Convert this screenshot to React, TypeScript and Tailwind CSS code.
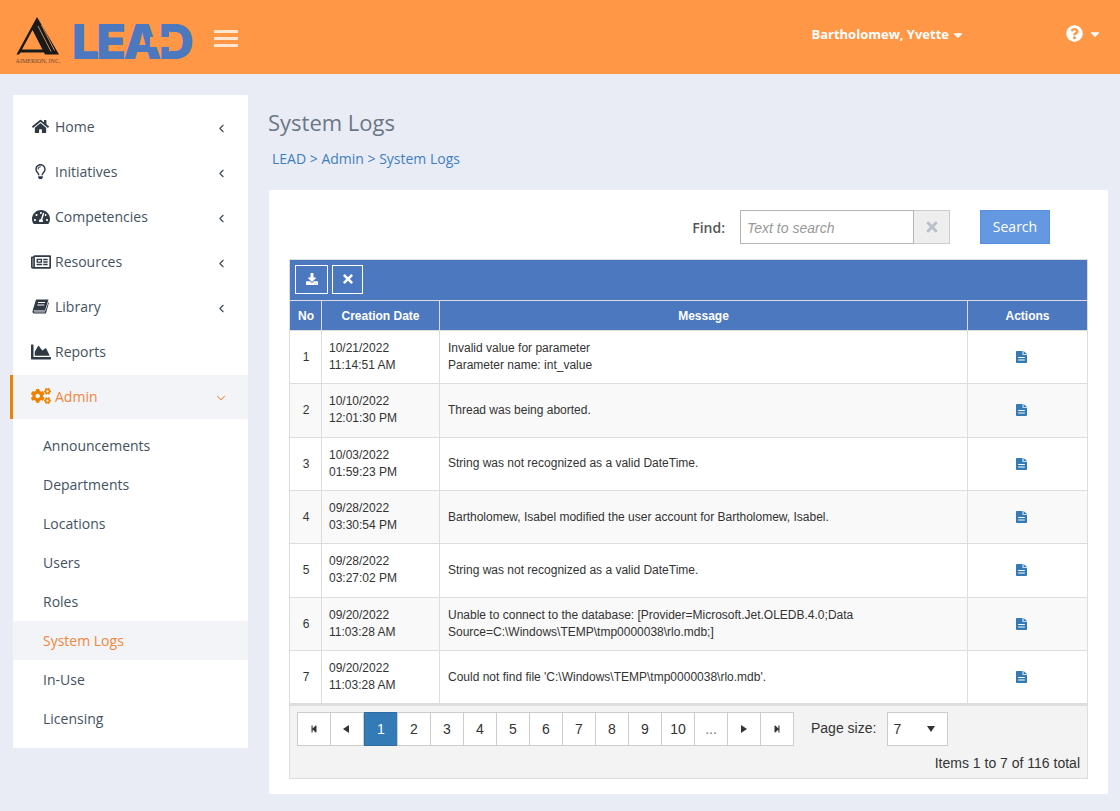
import { ChevronDown, ChevronLeft } from "lucide-react";
import {
  FaCaretDown,
  FaChartArea,
  FaCogs,
  FaDownload,
  FaHome,
  FaQuestionCircle,
  FaRegLightbulb,
  FaRegNewspaper,
  FaStepBackward,
  FaStepForward,
  FaTachometerAlt,
  FaTimes,
} from "react-icons/fa";

const OPEN_SANS = "font-['Open_Sans',sans-serif]";

function BookIcon() {
  return (
    <svg width="17" height="15" viewBox="0 0 17 15" fill="currentColor">
      <path d="M4 0.5H16.5L13.2 11H2.2L0.5 12Z" />
      <path d="M0.5 12.5C0.5 11.8 1.2 11.5 2 11.5H13.6L16.4 3.2L17 3.6L13.9 14.5H2C1 14.5 0.5 13.5 0.5 12.5Z" />
      <path d="M6 3.5H13M5.3 6H12.3" stroke="#fff" strokeWidth="1" />
      <path d="M2 12.9H13" stroke="#fff" strokeWidth="0.8" />
    </svg>
  );
}

function DocIcon() {
  return (
    <svg width="11" height="12" viewBox="0 0 11 12" fill="currentColor">
      <path
        fillRule="evenodd"
        d="M0 1C0 0.4 0.4 0 1 0H6.5V3.8H11V11C11 11.6 10.6 12 10 12H1C0.4 12 0 11.6 0 11ZM2.2 6V7H8.8V6ZM2.2 8.4V9.4H8.8V8.4Z"
      />
      <path d="M7.5 0L11 2.9H7.5Z" />
    </svg>
  );
}

const MENU = [
  { label: "Home", icon: <FaHome size={17} />, chevron: true },
  { label: "Initiatives", icon: <FaRegLightbulb size={15} />, chevron: true },
  { label: "Competencies", icon: <FaTachometerAlt size={18} />, chevron: true },
  { label: "Resources", icon: <FaRegNewspaper size={20} />, chevron: true },
  { label: "Library", icon: <BookIcon />, chevron: true },
  { label: "Reports", icon: <FaChartArea size={20} />, chevron: false },
];

const ADMIN_ITEMS = [
  "Announcements",
  "Departments",
  "Locations",
  "Users",
  "Roles",
  "System Logs",
  "In-Use",
  "Licensing",
];

const ROWS: { date: string; time: string; message: string[] }[] = [
  {
    date: "10/21/2022",
    time: "11:14:51 AM",
    message: ["Invalid value for parameter", "Parameter name: int_value"],
  },
  { date: "10/10/2022", time: "12:01:30 PM", message: ["Thread was being aborted."] },
  {
    date: "10/03/2022",
    time: "01:59:23 PM",
    message: ["String was not recognized as a valid DateTime."],
  },
  {
    date: "09/28/2022",
    time: "03:30:54 PM",
    message: ["Bartholomew, Isabel modified the user account for Bartholomew, Isabel."],
  },
  {
    date: "09/28/2022",
    time: "03:27:02 PM",
    message: ["String was not recognized as a valid DateTime."],
  },
  {
    date: "09/20/2022",
    time: "11:03:28 AM",
    message: [
      "Unable to connect to the database: [Provider=Microsoft.Jet.OLEDB.4.0;Data",
      "Source=C:\\Windows\\TEMP\\tmp0000038\\rlo.mdb;]",
    ],
  },
  {
    date: "09/20/2022",
    time: "11:03:28 AM",
    message: ["Could not find file 'C:\\Windows\\TEMP\\tmp0000038\\rlo.mdb'."],
  },
];

function Logo() {
  return (
    <div className="ml-[14px] flex items-start">
      <div className="flex w-[48px] flex-col items-center">
        <svg width="44" height="40" viewBox="0 0 44 40" className="mt-[16px]">
          <path d="M21 1L43 38.5H29L16.5 14L6 33.5H28.5L30 36.5H4.5L3 38.5H0.5Z" fill="#1a1a1a" />
          <path d="M22 10L35 35.5M25.5 9L38.5 34.5" stroke="#c98a55" strokeWidth="1" />
        </svg>
        <span className="mt-[2px] whitespace-nowrap font-['Liberation_Serif',serif] text-[6px] leading-[6px] text-[#6b4a30]">
          AIMERION, INC.
        </span>
      </div>
      <div className="relative ml-[10px] mt-[13px] h-[48px] w-[120px]">
        <span className="block font-['Inter',sans-serif] text-[48px] font-black leading-[57px] tracking-[-2.6px] text-[#4c78c0]">
          LEAD
        </span>
        <svg width="120" height="48" viewBox="0 0 120 48" className="absolute left-0 top-0">
          <path d="M78 24H97V18L111 29L97 39V34H78Z" fill="#ff9747" />
        </svg>
      </div>
      <div className="ml-[22px] mt-[30px] flex w-[24px] flex-col gap-[4px]">
        <span className="h-[3px] bg-[#ffe6d1]" />
        <span className="h-[3px] bg-[#ffe6d1]" />
        <span className="h-[3px] bg-[#ffe6d1]" />
      </div>
    </div>
  );
}

function Header() {
  return (
    <header className={`flex h-[74px] items-start bg-[#ff9747] ${OPEN_SANS}`}>
      <Logo />
      <div className="ml-auto mt-[26px] flex h-[17px] items-center text-[13px] font-bold text-white">
        <span>Bartholomew, Yvette</span>
        <FaCaretDown size={14} className="ml-[2px]" />
      </div>
      <div className="ml-[101px] mr-[18px] mt-[25px] flex items-center text-white">
        <FaQuestionCircle size={17} />
        <FaCaretDown size={14} className="ml-[5px]" />
      </div>
    </header>
  );
}

function Sidebar() {
  return (
    <aside className={`ml-[13px] mt-[21px] h-[653px] w-[235px] shrink-0 bg-white pt-[10px] text-[14px] ${OPEN_SANS}`}>
      {MENU.map((item) => (
        <div key={item.label} className="flex h-[45px] items-center pl-[13px] pr-[20px] text-[#44525f]">
          <span className="flex w-[29px] justify-center pb-[2px] text-[#2f3a45]">{item.icon}</span>
          <span className="pb-[2px]">{item.label}</span>
          {item.chevron && <ChevronLeft size={13} strokeWidth={2} className="ml-auto mt-[2px] text-[#3b4752]" />}
        </div>
      ))}
      <div className="-ml-[3px] flex h-[44px] items-center border-l-[3px] border-[#ee8200] bg-[#f2f4f8] pl-[13px] pr-[20px] text-[#f0873a]">
        <span className="flex w-[29px] justify-center pb-[2px] text-[#ee8200]">
          <FaCogs size={20} />
        </span>
        <span className="pb-[2px]">Admin</span>
        <ChevronDown size={14} strokeWidth={1.75} className="ml-auto mt-[2px]" />
      </div>
      <div className="pt-[7px]">
        {ADMIN_ITEMS.map((item) => (
          <div
            key={item}
            className={
              item === "System Logs"
                ? "flex h-[39px] items-center bg-[#f2f4f8] pl-[30px] text-[#f0873a]"
                : "flex h-[39px] items-center pl-[30px] text-[#44525f]"
            }
          >
            {item}
          </div>
        ))}
      </div>
    </aside>
  );
}

function SearchBar() {
  return (
    <div className={`flex h-[34px] items-center justify-end pr-[38px] ${OPEN_SANS}`}>
      <span className="mr-[15px] text-[14px] font-semibold text-[#555]">Find:</span>
      <div className="flex h-[34px] w-[174px] items-center border border-[#b5b5b5] bg-white pl-[6px] pt-[2px] font-['Liberation_Sans',sans-serif] text-[14px] italic text-[#999]">
        Text to search
      </div>
      <div className="flex h-[34px] w-[36px] items-center justify-center border border-l-0 border-[#ccc] bg-[#eee] text-[#b9c0c9]">
        <FaTimes size={16} />
      </div>
      <button
        type="button"
        className="ml-[30px] h-[34px] w-[70px] border border-[#5a90dd] bg-[#6499e2] pb-[2px] text-[14px] text-white"
      >
        Search
      </button>
    </div>
  );
}

function PagerButton({ children, active }: { children: React.ReactNode; active?: boolean }) {
  return (
    <div
      className={
        active
          ? "flex h-[34px] w-[34px] items-center justify-center border border-[#2e6da4] bg-[#337ab7] text-white"
          : "-ml-px flex h-[34px] w-[34px] items-center justify-center border border-[#ccc] bg-white text-[#333]"
      }
    >
      {children}
    </div>
  );
}

function Pager() {
  return (
    <div className="h-[75px] border border-t-[2px] border-[#ddd] bg-[#f3f3f3] px-[7px] pt-[6px] text-[14px] text-[#333]">
      <div className="flex items-center pl-px">
        <PagerButton>
          <FaStepBackward size={8} />
        </PagerButton>
        <PagerButton>
          <span className="mr-[2px] h-0 w-0 border-y-[4px] border-r-[6px] border-y-transparent border-r-[#333]" />
        </PagerButton>
        <PagerButton active>1</PagerButton>
        {["2", "3", "4", "5", "6", "7", "8", "9", "10"].map((page) => (
          <PagerButton key={page}>{page}</PagerButton>
        ))}
        <PagerButton>
          <span className="text-[#777]">...</span>
        </PagerButton>
        <PagerButton>
          <span className="h-0 w-0 border-y-[4px] border-l-[6px] border-y-transparent border-l-[#333]" />
        </PagerButton>
        <PagerButton>
          <FaStepForward size={8} />
        </PagerButton>
        <span className="ml-[17px] pb-[2px]">Page size:</span>
        <div className="ml-[11px] flex h-[34px] w-[61px] items-center justify-between border border-[#ccc] bg-white pl-[5px] pr-[12px]">
          <span>7</span>
          <span className="h-0 w-0 border-x-[4px] border-t-[6px] border-x-transparent border-t-[#333]" />
        </div>
      </div>
      <div className="mt-[9px] text-right leading-[16px]">Items 1 to 7 of 116 total</div>
    </div>
  );
}

function LogTable() {
  return (
    <div className="mt-[15px] font-['Liberation_Sans',sans-serif] text-[12px] text-[#333]">
      <div className="flex h-[41px] items-center gap-[4px] border-x border-t border-[#ddd] bg-[#4c78c0] pb-[2px] pl-[5px] text-white">
        <div className="flex h-[29px] w-[33px] items-center justify-center border border-white">
          <FaDownload size={12} />
        </div>
        <div className="flex h-[29px] w-[31px] items-center justify-center border border-white">
          <FaTimes size={14} />
        </div>
      </div>
      <table className="w-full table-fixed border-collapse">
        <colgroup>
          <col className="w-[32px]" />
          <col className="w-[118px]" />
          <col className="w-[528px]" />
          <col />
        </colgroup>
        <thead>
          <tr className="h-[30px] bg-[#4c78c0] font-bold text-white">
            <th className="border border-[#ddd] pl-px">No</th>
            <th className="border border-[#ddd]">Creation Date</th>
            <th className="border border-[#ddd]">Message</th>
            <th className="border border-[#ddd]">Actions</th>
          </tr>
        </thead>
        <tbody>
          {ROWS.map((row, i) => (
            <tr key={i} className={i % 2 === 1 ? "h-[53.33px] bg-[#f9f9f9]" : "h-[53.33px] bg-white"}>
              <td className="border border-[#ddd] pl-px text-center">{i + 1}</td>
              <td className="border border-[#ddd] pl-[7px] leading-[17px]">
                {row.date}
                <br />
                {row.time}
              </td>
              <td className="border border-[#ddd] pl-[8px] leading-[17px]">
                {row.message.map((line) => (
                  <div key={line}>{line}</div>
                ))}
              </td>
              <td className="border border-[#ddd]">
                <div className="flex justify-center pr-[13px] text-[#337ab7]">
                  <DocIcon />
                </div>
              </td>
            </tr>
          ))}
        </tbody>
      </table>
      <Pager />
    </div>
  );
}

export default function App() {
  return (
    <div className="h-[811px] w-[1120px] overflow-hidden bg-[#e9ecf4]">
      <Header />
      <div className="flex">
        <Sidebar />
        <main className="ml-[20px] w-[840px]">
          <h1 className={`mt-[33px] text-[22px] leading-[30px] text-[#6b7785] ${OPEN_SANS}`}>System Logs</h1>
          <div className={`ml-[4px] mt-[12px] text-[14px] leading-[20px] text-[#3f7fbf] ${OPEN_SANS}`}>
            LEAD &gt; Admin &gt; System Logs
          </div>
          <section className="ml-px mt-[21px] h-[604px] w-[839px] bg-white px-[20px] pt-[20px]">
            <SearchBar />
            <LogTable />
          </section>
        </main>
      </div>
    </div>
  );
}
